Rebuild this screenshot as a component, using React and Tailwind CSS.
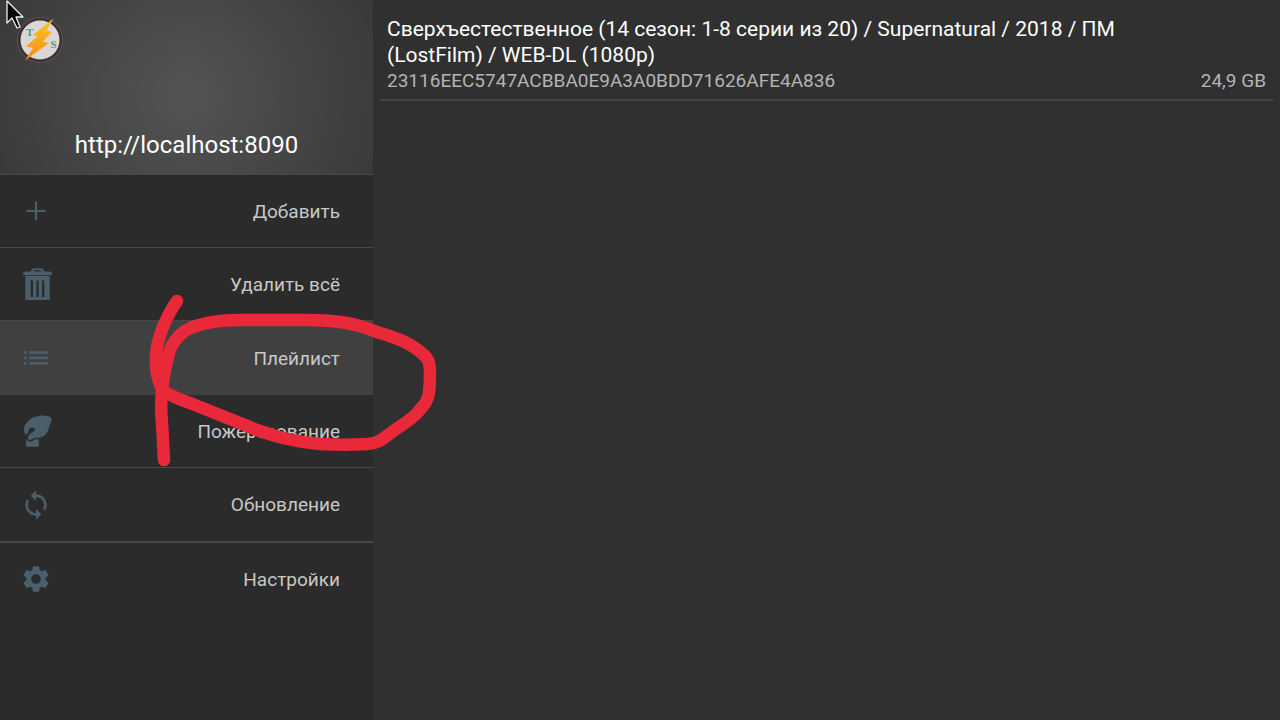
import { MdList, MdLoop, MdSettings } from 'react-icons/md';

function PlusIcon({ className }) {
  return (
    <svg viewBox="0 0 32 32" className={className} fill="none" stroke="currentColor" strokeWidth="2.200" aria-hidden="true">
      <path d="M6.500 16H25.500M16 6.500V25.500" />
    </svg>
  );
}

function TrashIcon({ className }) {
  return (
    <svg viewBox="0 0 32 32" className={className} fill="currentColor" fillRule="evenodd" aria-hidden="true">
      <path d="M3 7V5.500Q3 3.500 5.500 3.500H11Q11.500 0.200 14 0.200H21Q23.500 0.200 24 3.500H29.500Q32 3.500 32 5.500V7ZM13.500 3.500H21.500Q21.300 2.300 20.500 2.300H14.500Q13.700 2.300 13.500 3.500Z" />
      <path d="M5.300 7.800H29.700V32H5.300ZM10.700 12.500V29H13V12.500ZM16.400 12.500V29H18.700V12.500ZM22 12.500V29H24.300V12.500Z" />
    </svg>
  );
}

function HandIcon({ className }) {
  return (
    <svg viewBox="0 0 32 32" className={className} fill="currentColor" aria-hidden="true">
      <path d="M5.500 19.500C3.500 16.500 3.500 13 5 10C7.500 6 11 3 14.500 2C19 0.500 24 0 27 1C29.500 1.500 31.500 2.500 31.700 3.800C31.500 7 30 9 29 12.500C28 17 25.500 20.500 21.500 22C18.500 23.300 15.500 22.500 13.500 23.200C12 24.200 10.500 25 9.500 24.800C7.500 24.500 7.500 22 8.700 20.500L15.500 14.500C15 13 12.500 12.300 10 13C8.500 14.500 8.500 17.500 7 19.500Z" />
      <path d="M6.300 24C7.500 26.800 11 27 13.500 25.500L15 24.300H18.500L19 30.500Q18.800 31.700 17.500 31.700H7Q5.800 31.500 5.800 30.300Z" />
    </svg>
  );
}

function LogoIcon({ className }) {
  return (
    <svg viewBox="0 0 48 48" className={className} role="img" aria-label="TorrServe">
      <defs>
        <linearGradient id="bolt" x1="0" y1="0" x2="0" y2="1">
          <stop offset="0" stopColor="#fbc926" />
          <stop offset="1" stopColor="#f78a16" />
        </linearGradient>
      </defs>
      <circle cx="24" cy="24" r="23" fill="#5a504f" />
      <circle cx="24" cy="24" r="22" fill="#3d3131" />
      <circle cx="24" cy="24" r="19.500" fill="#dcd6d9" />
      <text x="10" y="19.500" fontFamily="Liberation Serif, serif" fontWeight="700" fontSize="11" fill="#4f9a78">T</text>
      <text x="34.500" y="31.500" fontFamily="Liberation Serif, serif" fontWeight="700" fontSize="11" fill="#4f9a78">S</text>
      <path d="M37.500 2.500L17 19L21.500 20.500L10 30.500L17 32L9 44.500L33 27L27 25.500L36 16L30.500 14.500Z" fill="url(#bolt)" />
    </svg>
  );
}

const items = [
  { label: 'Добавить', Icon: PlusIcon, row: 'h-[73px] border-b' },
  { label: 'Удалить всё', Icon: TrashIcon, row: 'h-[73px] border-b' },
  { label: 'Плейлист', Icon: MdList, row: 'h-[74px] bg-[#404040]', current: true },
  { label: 'Пожертвование', Icon: HandIcon, row: 'h-[73px] border-b' },
  { label: 'Обновление', Icon: MdLoop, row: 'h-[75px] border-b-2' },
  { label: 'Настройки', Icon: MdSettings, row: 'h-[72px]' },
];

export default function App() {
  return (
    <div className="relative flex min-h-screen overflow-hidden bg-[#303030] font-['Roboto',sans-serif]">
      <aside className="flex w-[373px] shrink-0 flex-col bg-[#2b2b2b]">
        <header className="flex h-[175px] flex-col justify-between border-b border-[#484848] bg-[radial-gradient(circle_at_50%_55%,#545454,#393939_210px)] px-4 pt-4 pb-[13px]">
          <LogoIcon className="size-12" />
          <p className="text-center text-2xl text-white">http://localhost:8090</p>
        </header>
        <nav>
          {items.map(({ label, Icon, row, current }) => (
            <button
              key={label}
              type="button"
              aria-current={current}
              className={`flex w-full items-center justify-between border-[#484848] pr-[33px] pl-5 text-[19px] text-[#c8c8c8] ${row}`}
            >
              <Icon className="size-8 text-[#4a5f6b]" />
              <span className="pt-0.5">{label}</span>
            </button>
          ))}
        </nav>
      </aside>

      <main className="min-w-0 flex-1 px-[7px]">
        <article className="border-b-2 border-[#444444] px-[7px] pt-4 pb-[5px]">
          <h1 className="pr-20 text-[21px] leading-[26px] text-white">
            Сверхъестественное (14 сезон: 1-8 серии из 20) / Supernatural / 2018 / ПМ (LostFilm) / WEB-DL (1080p)
          </h1>
          <div className="flex justify-between text-[19px] leading-[26px] text-[#b4b4b4]">
            <span>23116EEC5747ACBBA0E9A3A0BDD71626AFE4A836</span>
            <span>24,9 GB</span>
          </div>
        </article>
      </main>

      <svg viewBox="0 0 300 190" className="pointer-events-none absolute top-[285px] left-[145px] h-[190px] w-[300px]" fill="none" stroke="#e92839" strokeWidth="12.500" strokeLinecap="round" strokeLinejoin="round" aria-hidden="true">
        <path d="M32 16C24 27 15 46 12 62C10 74 10 90 17 104L20 107C28 112 36 115 45 118L75 130C90 136 100 140 112 145C121 148 130 151 138 153C150 156 162 158 175 159C192 160 208 160 222 159C236 158 240 152 247 147C258 139 266 135 272 128C279 120 283 116 284 108C285 100 285 95 285 86C284 79 285 76 280 71C275 66 269 62 262 58C252 53 242 50 232 47C222 43 213 40 202 38C190 36 176 35 162 35H95C83 35 72 36 62 38C50 41 42 43 35 50C28 57 25 62 23 72C20 84 18 93 17 105C16 116 16 128 17 138L19 175" />
      </svg>
      <svg viewBox="0 0 20 30" className="pointer-events-none absolute top-0 left-[5px] h-[30px] w-5" aria-hidden="true">
        <path d="M2 1V23L7 18L12 28L15 27L11 17H18Z" fill="#000" stroke="#eee" strokeWidth="1.300" strokeLinejoin="round" />
      </svg>
    </div>
  );
}
